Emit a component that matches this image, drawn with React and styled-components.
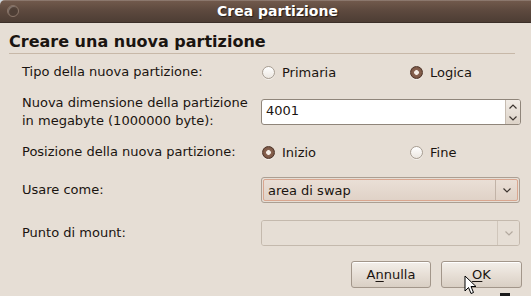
import styled, { createGlobalStyle } from "styled-components";

const GlobalStyle = createGlobalStyle`
  html, body {
    margin: 0;
    padding: 0;
    background: #cfd7de;
  }
  body {
    font-family: "DejaVu Sans", "Liberation Sans", sans-serif;
    font-size: 13px;
    color: #1a1410;
  }
`;

const Window = styled.div`
  position: relative;
  width: 531px;
  height: 296px;
  background: #e6ded5;
  border-radius: 5px 0 0 0;
  overflow: hidden;
`;

const TitleBar = styled.div`
  height: 22px;
  border-bottom: 1px solid #3b2f28;
  background: linear-gradient(#735b4d 0%, #5e4a3f 45%, #4d3d34 100%);
  box-shadow: inset 0 1px 0 rgba(255, 255, 255, 0.18);
  display: flex;
  align-items: center;
  padding: 0 0 0 7px;
`;

const CloseDot = styled.div`
  width: 10px;
  height: 10px;
  border-radius: 50%;
  border: 1px solid #8a7568;
  background: radial-gradient(circle at 60% 65%, #4e3e35 40%, #6a5548 100%);
  box-shadow: inset 1px 1px 0 rgba(255, 255, 255, 0.25);
`;

const Title = styled.div`
  flex: 1;
  text-align: center;
  padding-left: 5px;
  color: #ffffff;
  font-weight: bold;
  font-size: 14px;
  text-shadow: 1px 1px 1px #241b16;
`;

const Body = styled.div`
  padding: 0 9px 0 9px;
`;

const Heading = styled.h1`
  margin: 0 7px 0 0;
  padding: 8px 0 1px 0;
  font-size: 16px;
  font-weight: bold;
  line-height: 21px;
  border-bottom: 1px solid #c7b8a8;
`;

const Form = styled.div`
  display: flex;
  flex-direction: column;
  padding: 0 0 0 13px;
`;

const FormRow = styled.div`
  display: grid;
  grid-template-columns: 239px 1fr;
  align-items: center;
  height: ${(p) => p.$h}px;
  margin-top: ${(p) => p.$mt}px;
`;

const Label = styled.div`
  line-height: 18px;
`;

const RadioGroup = styled.div`
  display: grid;
  grid-template-columns: 148px 1fr;
  padding-left: 1px;
`;

const RadioLabel = styled.label`
  display: flex;
  align-items: center;
  gap: 7px;
`;

const RadioDot = styled.span`
  width: 13px;
  height: 13px;
  border-radius: 50%;
  box-sizing: border-box;
  border: 1px solid ${(p) => (p.$on ? "#4d3327" : "#a79d92")};
  background: ${(p) =>
    p.$on
      ? "radial-gradient(circle, #f4ede6 0 2px, #8a6452 2.7px, #6d4a39 100%)"
      : "linear-gradient(#ffffff, #ece7e1)"};
  box-shadow: 0 1px 0 rgba(255, 255, 255, 0.6);
`;

const SpinBox = styled.div`
  display: flex;
  height: 24px;
  margin-right: 1px;
  border: 1px solid #8f857a;
  border-radius: 3px;
  background: #ffffff;
  overflow: hidden;
`;

const SpinText = styled.div`
  flex: 1;
  padding-left: 4px;
  line-height: 22px;
`;

const SpinButtons = styled.div`
  width: 14px;
  display: flex;
  flex-direction: column;
  border-left: 1px solid #c6bcb1;
  background: linear-gradient(#f1ece6, #ddd3c8);
`;

const SpinArrow = styled.div`
  flex: 1;
  display: flex;
  align-items: center;
  justify-content: center;
`;

const Combo = styled.div`
  display: flex;
  height: 26px;
  margin-right: 2px;
  box-sizing: border-box;
  border: 1px solid ${(p) => (p.$disabled ? "#c4b9ad" : "#ab9f93")};
  border-radius: 3px;
  padding: ${(p) => (p.$disabled ? "0" : "1px")};
  background: #e6ded5;
`;

const ComboInner = styled.div`
  flex: 1;
  display: flex;
  border: ${(p) => (p.$disabled ? "none" : "1px solid #d9a68f")};
  border-radius: 2px;
  background: ${(p) =>
    p.$disabled ? "#e6ded5" : "linear-gradient(#eadfd6, #e0d2c7)"};
`;

const ComboText = styled.div`
  flex: 1;
  padding-left: 4px;
  line-height: 22px;
`;

const ComboButton = styled.div`
  width: 21px;
  display: flex;
  align-items: center;
  justify-content: center;
  border-left: 1px solid ${(p) => (p.$disabled ? "#d0c6bb" : "#c2b3a7")};
`;

const ButtonBar = styled.div`
  display: flex;
  justify-content: flex-end;
  gap: 10px;
  margin-top: 15px;
`;

const Button = styled.button`
  width: ${(p) => p.$w}px;
  height: 27px;
  border: 1px solid #a2968a;
  border-radius: 3px;
  background: linear-gradient(#f3efea 0%, #e7dfd6 50%, #d9cfc4 100%);
  box-shadow: inset 0 1px 0 #ffffff;
  font-family: "DejaVu Sans", "Liberation Sans", sans-serif;
  font-size: 13px;
  color: #1a1410;
  padding: 0;
  u {
    text-decoration-thickness: 1px;
    text-underline-offset: 2px;
  }
`;

const Cursor = styled.svg`
  position: absolute;
  left: 464px;
  top: 275px;
`;

const StrayMark = styled.div`
  position: absolute;
  left: 500px;
  top: 293px;
  width: 10px;
  height: 3px;
  background: #1b1b1b;
`;

const Chevron = ({ up, color = "#3d3530" }) => (
  <svg width="8" height="5" viewBox="0 0 8 5">
    <path
      d={up ? "M0.5 4.5 L4 1 L7.5 4.5" : "M0.5 0.5 L4 4 L7.5 0.5"}
      fill="none"
      stroke={color}
      strokeWidth="1.2"
    />
  </svg>
);

const Radio = ({ on, children }) => (
  <RadioLabel>
    <RadioDot $on={on} />
    {children}
  </RadioLabel>
);

export default function App() {
  return (
    <>
      <GlobalStyle />
      <Window>
        <TitleBar>
          <CloseDot />
          <Title>Crea partizione</Title>
        </TitleBar>
        <Body>
          <Heading>Creare una nuova partizione</Heading>
          <Form>
            <FormRow $h={24} $mt={6}>
              <Label>Tipo della nuova partizione:</Label>
              <RadioGroup>
                <Radio>Primaria</Radio>
                <Radio on>Logica</Radio>
              </RadioGroup>
            </FormRow>
            <FormRow $h={36} $mt={10}>
              <Label>
                Nuova dimensione della partizione
                <br />
                in megabyte (1000000 byte):
              </Label>
              <SpinBox>
                <SpinText>4001</SpinText>
                <SpinButtons>
                  <SpinArrow>
                    <Chevron up />
                  </SpinArrow>
                  <SpinArrow>
                    <Chevron />
                  </SpinArrow>
                </SpinButtons>
              </SpinBox>
            </FormRow>
            <FormRow $h={24} $mt={10}>
              <Label>Posizione della nuova partizione:</Label>
              <RadioGroup>
                <Radio on>Inizio</Radio>
                <Radio>Fine</Radio>
              </RadioGroup>
            </FormRow>
            <FormRow $h={26} $mt={13}>
              <Label>Usare come:</Label>
              <Combo>
                <ComboInner>
                  <ComboText>area di swap</ComboText>
                  <ComboButton>
                    <Chevron />
                  </ComboButton>
                </ComboInner>
              </Combo>
            </FormRow>
            <FormRow $h={26} $mt={17}>
              <Label>Punto di mount:</Label>
              <Combo $disabled>
                <ComboInner $disabled>
                  <ComboText />
                  <ComboButton $disabled>
                    <Chevron color="#b3a99f" />
                  </ComboButton>
                </ComboInner>
              </Combo>
            </FormRow>
          </Form>
          <ButtonBar>
            <Button $w={80}>
              A<u>n</u>nulla
            </Button>
            <Button $w={81}>
              <u>O</u>K
            </Button>
          </ButtonBar>
        </Body>
        <Cursor width="13" height="20" viewBox="0 0 13 20">
          <path
            d="M1 1 L1 16 L4.5 12.5 L7 18.5 L9.5 17.5 L7 11.5 L12 11.5 Z"
            fill="#ffffff"
            stroke="#000000"
            strokeWidth="1"
            strokeLinejoin="round"
          />
        </Cursor>
        <StrayMark />
      </Window>
    </>
  );
}
